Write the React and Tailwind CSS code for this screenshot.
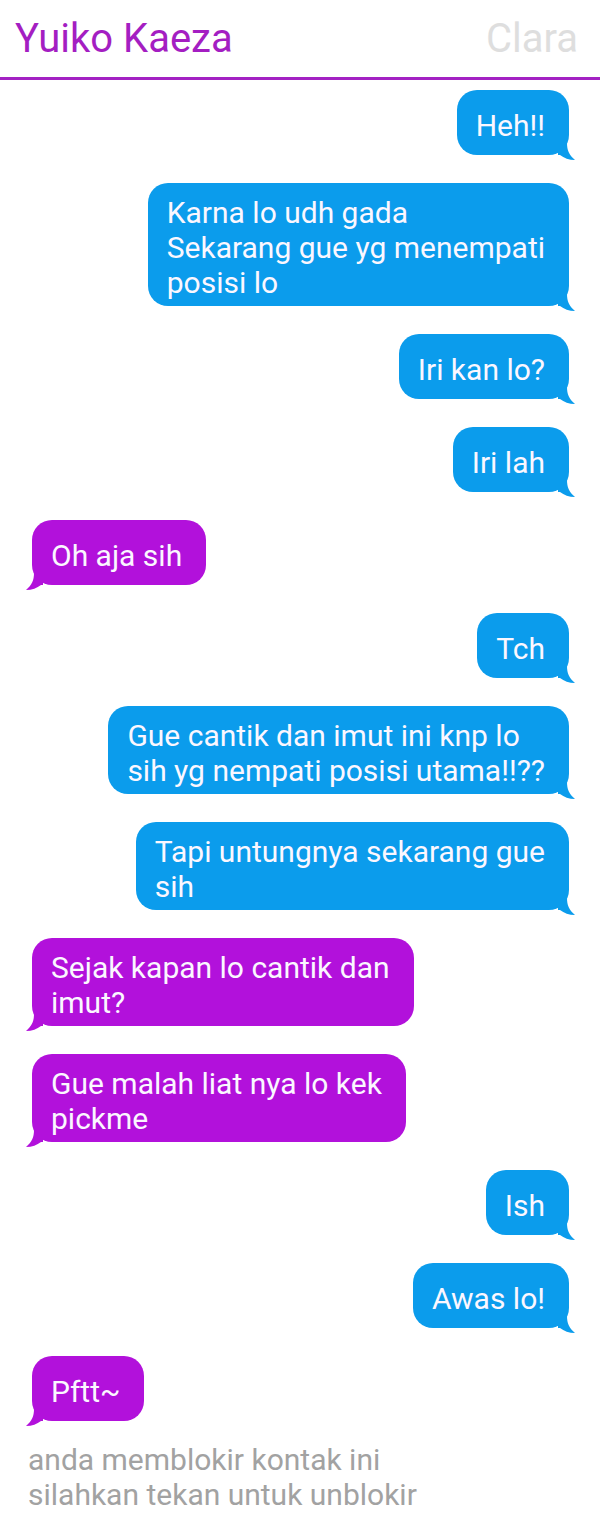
const MESSAGES = [
  { me: true, lines: ['Heh!!'] },
  { me: true, lines: ['Karna lo udh gada', 'Sekarang gue yg menempati', 'posisi lo'] },
  { me: true, lines: ['Iri kan lo?'] },
  { me: true, lines: ['Iri lah'] },
  { me: false, lines: ['Oh aja sih'] },
  { me: true, lines: ['Tch'] },
  { me: true, lines: ['Gue cantik dan imut ini knp lo', 'sih yg nempati posisi utama!!??'] },
  { me: true, lines: ['Tapi untungnya sekarang gue', 'sih'] },
  { me: false, lines: ['Sejak kapan lo cantik dan', 'imut?'] },
  { me: false, lines: ['Gue malah liat nya lo kek', 'pickme'] },
  { me: true, lines: ['Ish'] },
  { me: true, lines: ['Awas lo!'] },
  { me: false, lines: ['Pftt~'] },
]

function Tail({ me }) {
  // small curled tail at the bottom corner of the bubble
  if (me) {
    return (
      <svg width="20" height="24" viewBox="0 0 20 24" className="absolute -right-[9px] -bottom-[6px] fill-[#0b9cec]">
        <path d="M0 0 L9 0 L9 6 C9 13 11 18 17 23 C11 23 6 21 2 18 L0 18 Z" />
      </svg>
    )
  }
  return (
    <svg width="20" height="24" viewBox="0 0 20 24" className="absolute -left-[9px] -bottom-[6px] fill-[#b211db]">
      <path d="M20 0 L11 0 L11 6 C11 13 9 18 3 23 C9 23 14 21 18 18 L20 18 Z" />
    </svg>
  )
}

function Bubble({ me, lines }) {
  return (
    <div className={me ? 'flex justify-end pr-[31px]' : 'flex justify-start pl-[32px]'}>
      <div
        className={
          'relative flex min-h-[65px] flex-col justify-center rounded-[20px] pt-[12px] pb-[6px] pl-[19px] pr-[24px] text-[30px] leading-[35px] text-[#fbf7ff] ' +
          (me ? 'bg-[#0b9cec]' : 'bg-[#b211db]')
        }
      >
        {lines.map((l, i) => (
          <div key={i} className="whitespace-nowrap">{l}</div>
        ))}
        <Tail me={me} />
      </div>
    </div>
  )
}

export default function App() {
  return (
    <div className="min-h-[1522px] bg-white font-['Roboto',sans-serif]">
      <div className="flex h-[80px] items-start justify-between border-b-[3px] border-[#a322c3] px-[15px] pt-[16px]">
        <div className="text-[40px] leading-[45px] text-[#a41ec2]">Yuiko Kaeza</div>
        <div className="pr-[7px] text-[40px] leading-[45px] text-[#dedede]">Clara</div>
      </div>

      <div className="flex flex-col gap-[28px] pt-[10px]">
        {MESSAGES.map((m, i) => (
          <Bubble key={i} me={m.me} lines={m.lines} />
        ))}
      </div>

      <div className="mt-[21px] pl-[28px] text-[30px] leading-[35px] text-[#a2a2a2]">
        <div>anda memblokir kontak ini</div>
        <div>silahkan tekan untuk unblokir</div>
      </div>
    </div>
  )
}
